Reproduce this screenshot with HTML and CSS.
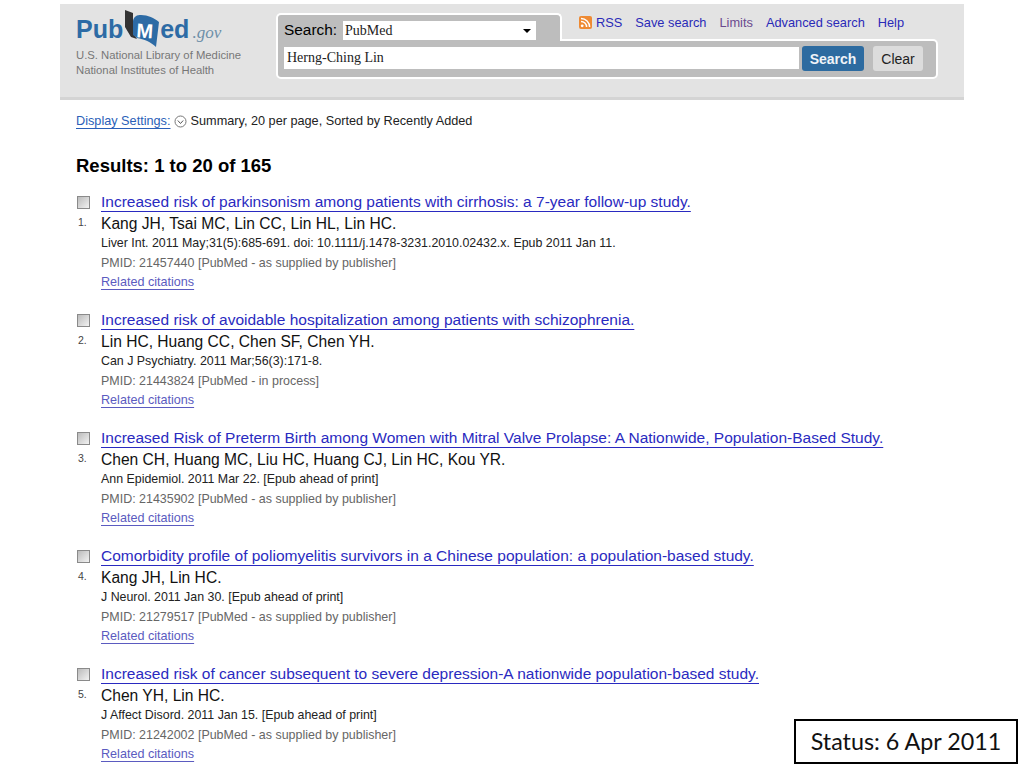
FILE: index.html
```html
<!DOCTYPE html>
<html lang="en">
<head>
<meta charset="utf-8">
<title>PubMed results</title>
<link rel="stylesheet" href="styles.css">
</head>
<body>
<div class="page">
  <header class="masthead">
    <div class="brand">
      <div class="logo">
        <span class="logo-word">Pub</span>
        <svg class="logo-book" width="38" height="38" viewBox="0 0 38 38" aria-hidden="true">
          <path d="M3 1 L11 4 L11 24 L15 30 L9 28 L3 18 Z" fill="#333"/>
          <path d="M11 12 C12 7 15 6 19 6 C26 6 32 9 37 13 L34 38 C29 33 22 30 15 29 L11 26 Z" fill="#2d6ba5"/>
          <text x="14.5" y="29" class="logo-m" transform="rotate(4 24 22)">M</text>
        </svg>
        <span class="logo-word logo-ed">ed</span>
        <span class="logo-gov">.gov</span>
      </div>
      <div class="agency">U.S. National Library of Medicine<br>National Institutes of Health</div>
    </div>
    <form class="search">
      <div class="search-top">
        <div class="db-tab">
          <label class="db-label">Search:</label>
          <div class="db-select">PubMed<span class="db-arrow"></span></div>
        </div>
        <nav class="tools">
          <svg class="rss" width="13" height="13" viewBox="0 0 13 13" aria-hidden="true">
            <rect width="13" height="13" rx="2" fill="#ee8a33"/>
            <circle cx="3.2" cy="9.8" r="1.4" fill="#fff"/>
            <path d="M2 5.4 A5.6 5.6 0 0 1 7.6 11 M2 2.4 A8.6 8.6 0 0 1 10.6 11" fill="none" stroke="#fff" stroke-width="1.5"/>
          </svg>
          <a class="tool tool-rss" href="#">RSS</a>
          <a class="tool" href="#">Save search</a>
          <a class="tool visited" href="#">Limits</a>
          <a class="tool" href="#">Advanced search</a>
          <a class="tool" href="#">Help</a>
        </nav>
      </div>
      <div class="search-box">
        <div class="term">Herng-Ching Lin</div>
        <button class="btn btn-search" type="button">Search</button>
        <button class="btn btn-clear" type="button">Clear</button>
      </div>
    </form>
  </header>

  <main class="content">
    <p class="display"><a href="#">Display Settings:</a>
      <svg class="disc" width="13" height="13" viewBox="0 0 13 13" aria-hidden="true"><circle cx="6.5" cy="6.5" r="5.5" fill="#fff" stroke="#777"/><path d="M3.8 5.5 L6.5 8.5 L9.2 5.5" fill="none" stroke="#555"/></svg>
      Summary, 20 per page, Sorted by Recently Added</p>
    <h2 class="count">Results: 1 to 20 of 165</h2>

    <article class="result">
      <div class="marker"><span class="check"></span><span class="num">1.</span></div>
      <div class="body">
        <a class="title" href="#">Increased risk of parkinsonism among patients with cirrhosis: a 7-year follow-up study.</a>
        <div class="authors">Kang JH, Tsai MC, Lin CC, Lin HL, Lin HC.</div>
        <div class="journal">Liver Int. 2011 May;31(5):685-691. doi: 10.1111/j.1478-3231.2010.02432.x. Epub 2011 Jan 11.</div>
        <div class="pmid">PMID: 21457440 [PubMed - as supplied by publisher]</div>
        <a class="related" href="#">Related citations</a>
      </div>
    </article>
    <article class="result">
      <div class="marker"><span class="check"></span><span class="num">2.</span></div>
      <div class="body">
        <a class="title" href="#">Increased risk of avoidable hospitalization among patients with schizophrenia.</a>
        <div class="authors">Lin HC, Huang CC, Chen SF, Chen YH.</div>
        <div class="journal">Can J Psychiatry. 2011 Mar;56(3):171-8.</div>
        <div class="pmid">PMID: 21443824 [PubMed - in process]</div>
        <a class="related" href="#">Related citations</a>
      </div>
    </article>
    <article class="result">
      <div class="marker"><span class="check"></span><span class="num">3.</span></div>
      <div class="body">
        <a class="title" href="#">Increased Risk of Preterm Birth among Women with Mitral Valve Prolapse: A Nationwide, Population-Based Study.</a>
        <div class="authors">Chen CH, Huang MC, Liu HC, Huang CJ, Lin HC, Kou YR.</div>
        <div class="journal">Ann Epidemiol. 2011 Mar 22. [Epub ahead of print]</div>
        <div class="pmid">PMID: 21435902 [PubMed - as supplied by publisher]</div>
        <a class="related" href="#">Related citations</a>
      </div>
    </article>
    <article class="result">
      <div class="marker"><span class="check"></span><span class="num">4.</span></div>
      <div class="body">
        <a class="title" href="#">Comorbidity profile of poliomyelitis survivors in a Chinese population: a population-based study.</a>
        <div class="authors">Kang JH, Lin HC.</div>
        <div class="journal">J Neurol. 2011 Jan 30. [Epub ahead of print]</div>
        <div class="pmid">PMID: 21279517 [PubMed - as supplied by publisher]</div>
        <a class="related" href="#">Related citations</a>
      </div>
    </article>
    <article class="result">
      <div class="marker"><span class="check"></span><span class="num">5.</span></div>
      <div class="body">
        <a class="title" href="#">Increased risk of cancer subsequent to severe depression-A nationwide population-based study.</a>
        <div class="authors">Chen YH, Lin HC.</div>
        <div class="journal">J Affect Disord. 2011 Jan 15. [Epub ahead of print]</div>
        <div class="pmid">PMID: 21242002 [PubMed - as supplied by publisher]</div>
        <a class="related" href="#">Related citations</a>
      </div>
    </article>
  </main>
</div>
<div class="status">Status: 6 Apr 2011</div>
</body>
</html>
```
FILE: styles.css
```css
* { box-sizing: border-box; }
html, body { margin: 0; height: 768px; overflow: hidden; background: #fff; }
body { font-family: "Liberation Sans", Arial, sans-serif; color: #000; position: relative; }
a { color: #2a2ab8; }

.page { width: 904px; margin-left: 60px; padding-top: 4px; }

.masthead {
  height: 96px;
  background: #e3e3e3;
  border-bottom: 3px solid #d4d4d4;
  display: flex;
  padding: 9px 0 0 16px;
}
.brand { width: 200px; }
.logo { display: flex; align-items: flex-start; height: 37px; }
.logo-word { font-size: 25px; font-weight: 700; color: #2d6ba5; line-height: 27px; margin-top: 3px; }
.logo-book { margin-left: -1px; margin-top: -4px; flex: none; }
.logo-m { font: 700 20px "Liberation Sans", Arial, sans-serif; fill: #fff; }
.logo-gov { font: italic 17px "Liberation Serif", serif; color: #6d8fa8; margin: 10px 0 0 3px; }
.agency { font-size: 11.3px; line-height: 15px; color: #777; margin-top: -2px; }

.search { width: 662px; }
.search-top { display: flex; height: 26px; }
.db-tab {
  width: 286px;
  height: 28px;
  position: relative;
  background: #bdbdbd;
  border: 2px solid #fff;
  border-bottom: 0;
  border-radius: 5px 5px 0 0;
  display: flex;
  align-items: flex-start;
  padding: 6px 0 0 6px;
}
.db-label { font-size: 15.4px; line-height: 18px; width: 59px; }
.db-select {
  width: 193px;
  height: 19px;
  background: #fff;
  font: 14px/20px "Liberation Serif", serif;
  color: #222;
  padding-left: 2px;
  position: relative;
}
.db-arrow {
  position: absolute;
  right: 5px;
  top: 8px;
  border: 4px solid transparent;
  border-top-color: #000;
  border-bottom: 0;
}
.tools { display: flex; align-items: flex-start; padding: 2px 0 0 17px; font-size: 12.8px; line-height: 16px; }
.rss { margin: 1px 4px 0 0; }
.tool { text-decoration: none; margin-right: 13px; color: #2a2ab8; }
.visited { color: #6b4a8f; }

.search-box {
  width: 662px;
  height: 40px;
  background: #bdbdbd;
  border: 2px solid #fff;
  border-radius: 0 5px 5px 5px;
  display: flex;
  align-items: flex-start;
  padding: 6px 0 0 6px;
}
.term {
  width: 515px;
  height: 22px;
  background: #fff;
  font: 14px/22px "Liberation Serif", serif;
  color: #222;
  padding-left: 3px;
}
.btn {
  height: 25px;
  border: 0;
  border-radius: 3px;
  padding: 0;
  font: 14px "Liberation Sans", Arial, sans-serif;
  margin-top: -1px;
}
.btn-search { width: 62px; margin-left: 3px; background: #2d6ba0; color: #f0f4f8; font-weight: 700; }
.btn-clear { width: 50px; margin-left: 9px; background: #dcdcdc; color: #222; }

.content { padding: 0 0 0 16px; }
.display { margin: 13px 0 0; font-size: 12.7px; line-height: 16px; color: #222; }
.display a { color: #2a5fb8; text-underline-offset: 3px; text-decoration-thickness: 1px; }
.disc { vertical-align: -3px; margin: 0; }
.count { font-size: 18.5px; line-height: 21px; margin: 26px 0 0; font-weight: 700; }

.result { display: flex; height: 118px; }
.count + .result { margin-top: 16px; }
.marker { width: 25px; flex: none; padding-left: 1px; }
.check {
  display: block;
  width: 13px;
  height: 13px;
  margin-top: 4px;
  background: linear-gradient(135deg, #bbb, #f2f2f2);
  border: 1px solid #8a8a8a;
}
.num { display: block; font-size: 10.5px; line-height: 12px; color: #444; margin-top: 7px; padding-left: 1px; }
.body { display: flex; flex-direction: column; align-items: flex-start; }
.title { font-size: 15.5px; line-height: 20px; color: #2a2ac0; white-space: nowrap; text-underline-offset: 4px; text-decoration-thickness: 1px; }
.authors { font-size: 15.6px; line-height: 23px; color: #111; }
.journal { font-size: 12.4px; line-height: 17px; color: #222; }
.pmid { font-size: 12.46px; line-height: 22px; color: #666; }
.related { font-size: 12.6px; line-height: 16px; color: #5b5bc0; text-underline-offset: 3px; text-decoration-thickness: 1px; }

.status {
  position: absolute;
  left: 794px;
  top: 719px;
  width: 224px;
  height: 45px;
  border: 2px solid #000;
  background: #fff;
  font: 23.3px/41px Lato, "Liberation Sans", sans-serif;
  text-align: center;
  color: #111;
}
```
